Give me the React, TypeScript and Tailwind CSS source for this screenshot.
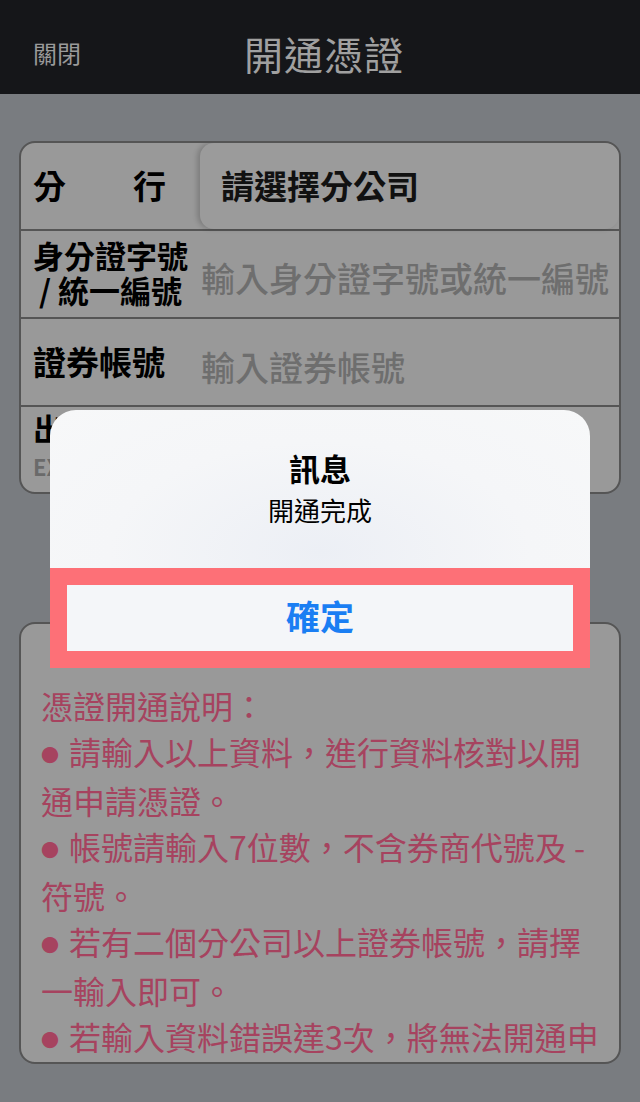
import React from 'react';

const notes = [
  { text: '請輸入以上資料，進行資料核對以開通申請憑證。' },
  { text: '帳號請輸入7位數，不含券商代號及 -符號。' },
  { text: '若有二個分公司以上證券帳號，請擇一輸入即可。' },
  { text: '若輸入資料錯誤達3次，將無法開通申請憑證，請洽服務專線', tail: '(02)2181-5888' },
];

function Bullet() {
  return <span className="inline-block w-[28px] align-[3px] text-[18px]">●</span>;
}

export default function App() {
  return (
    <div className="relative h-[1102px] w-[640px] overflow-hidden bg-[#797c80] font-['Noto_Sans_CJK_TC','Noto_Sans',sans-serif]">
      {/* nav bar */}
      <div className="grid h-[94px] grid-cols-[1fr_auto_1fr] items-center bg-[#151619]">
        <div className="pl-[33px] pt-[12px] text-[24px] text-[#9a9a9a]">關閉</div>
        <div className="pl-[8px] pt-[12px] text-[39px] tracking-[1px] text-[#a0a0a0]">開通憑證</div>
        <div />
      </div>

      <div className="px-[19px] pt-[47px]">
        {/* form card */}
        <div className="overflow-hidden rounded-[16px] border-2 border-[#555] bg-[#999]">
          <div className="flex h-[86px] items-stretch">
            <div className="flex w-[179px] items-center pl-[12px]">
              <div className="flex w-[133px] justify-between text-[33px] font-bold text-black">
                <span>分</span>
                <span>行</span>
              </div>
            </div>
            <div className="flex flex-1 items-center rounded-[14px] bg-[#9b9b9b] pl-[21px] text-[33px] font-bold text-[#111] shadow-[-3px_0_5px_rgba(0,0,0,0.18)]">
              請選擇分公司
            </div>
          </div>
          <div className="h-[2px] bg-[#555]" />
          <div className="flex h-[86px] items-center">
            <div className="w-[180px] pb-[4px] pl-[12px] text-[31px] font-bold leading-[35px] text-black">
              <div>身分證字號</div>
              <div className="pl-[6px]">/ 統一編號</div>
            </div>
            <div className="pt-[6px] text-[34px] font-medium text-[#6e6e6e]">輸入身分證字號或統一編號</div>
          </div>
          <div className="h-[2px] bg-[#555]" />
          <div className="flex h-[86px] items-center">
            <div className="w-[180px] pl-[12px] text-[33px] font-bold text-black">證券帳號</div>
            <div className="pt-[8px] text-[34px] font-medium text-[#6e6e6e]">輸入證券帳號</div>
          </div>
          <div className="h-[2px] bg-[#555]" />
          <div className="h-[85px] pl-[12px] pt-[2px]">
            <div className="text-[31px] font-bold leading-[38px] text-black">出生日期</div>
            <div className="mt-[2px] text-[22px] font-bold leading-[34px] text-[#6a6a6a]">EX：0700101</div>
          </div>
        </div>

        {/* notes card */}
        <div className="mt-[128px] h-[442px] overflow-hidden rounded-[16px] border-2 border-[#555] bg-[#999] pl-[20px] pr-[14px] pt-[58px] text-[32px] leading-[46px] text-[#a6435f]">
          <div>憑證開通說明：</div>
          {notes.map((n, i) => (
            <div key={i}>
              <Bullet />
              {n.text}
              {n.tail && <span className="text-[#6c6fa8]">{n.tail}</span>}
            </div>
          ))}
        </div>
      </div>

      {/* alert */}
      <div className="absolute left-[50px] top-[410px] w-[540px]">
        <div className="flex h-[158px] flex-col items-center rounded-t-[26px] bg-[radial-gradient(ellipse_at_50%_90%,#eceff5_0%,#f5f6f8_55%,#f7f8f9_100%)] pt-[38px]">
          <div className="text-[31px] font-bold leading-[40px] text-black">訊息</div>
          <div className="mt-[6px] text-[26px] leading-[32px] text-black">開通完成</div>
        </div>
        <div className="h-[100px] bg-[#fd7077] p-[17px]">
          <div className="flex h-[66px] items-center justify-center bg-[#f4f6f9] pb-[6px] text-[34px] font-bold text-[#1a7ef3]">
            確定
          </div>
        </div>
      </div>
    </div>
  );
}
